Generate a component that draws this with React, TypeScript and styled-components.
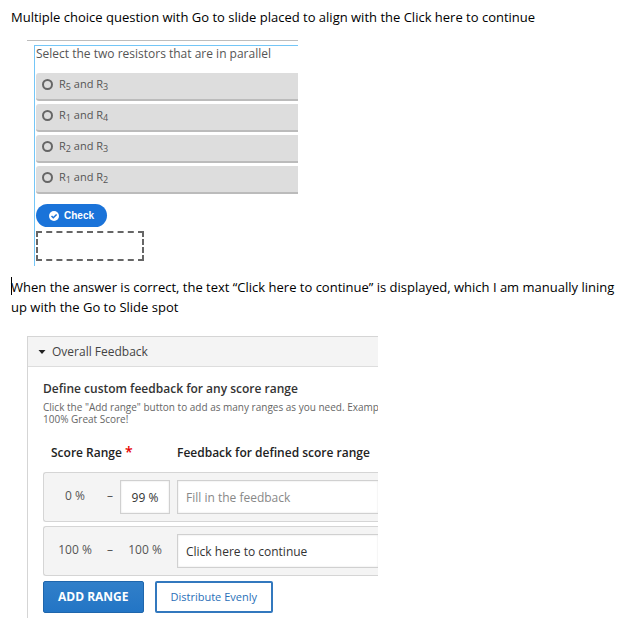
import React from "react";
import styled, { createGlobalStyle } from "styled-components";

const GlobalStyle = createGlobalStyle`
  *, *::before, *::after { box-sizing: border-box; }
  body {
    margin: 0;
    background: #fff;
    color: #000;
    font-family: "Open Sans", "Noto Sans", sans-serif;
  }
`;

const Document = styled.main`
  padding: 7px 0 6px 11px;
`;

const Paragraph = styled.p`
  margin: 0;
  font: 13px/20px "Open Sans", "Noto Sans", sans-serif;
`;

const Caret = styled.span`
  position: absolute;
  width: 1px;
  height: 18px;
  background: #000;
`;

const QuizFigure = styled.section`
  max-width: 271px;
  margin: 13px 0 11px 16px;
  padding: 4px 0 0 7px;
  border-top: 1px solid #bdbdbd;
`;

const QuizSlide = styled.form`
  padding: 0 0 5px 1px;
  border: solid #74c6f7;
  border-width: 1px 0 0 1px;
`;

const Question = styled.h2`
  margin: 0 0 11px;
  color: #555;
  font-size: 12px;
  font-weight: 400;
  line-height: 16px;
  white-space: nowrap;
`;

const Answers = styled.div`
  display: grid;
  gap: 3px;
  color: #555;
`;

const Answer = styled.label`
  display: flex;
  align-items: center;
  gap: 6px;
  height: 28px;
  padding: 0 6px 4px;
  background: #ddd;
  border-bottom: 2px solid #bbb;
  border-radius: 3px 0 0 3px;
  font-size: 11px;
  line-height: 20px;
`;

const Radio = styled.input`
  appearance: none;
  width: 11px;
  height: 11px;
  margin: 0;
  border: 2px solid #666;
  border-radius: 50%;

  &:checked { background: #1a73d9; }
`;

const Sub = styled.sub`
  font-size: 9px;
  line-height: 0;
  vertical-align: -2px;
`;

const CheckButton = styled.button`
  display: flex;
  align-items: center;
  gap: 5px;
  height: 23px;
  margin-top: 10px;
  padding: 0 13px;
  border: 0;
  border-radius: 12px;
  background: #1a73d9;
  color: #fff;
  font: 700 10px/16px "Liberation Sans", Arial, sans-serif;
`;

const HotSpot = styled.button`
  display: block;
  width: 108px;
  height: 30px;
  margin-top: 4px;
  border: 2px dashed #666;
  background: transparent;
`;

const FeedbackPanel = styled.section`
  max-width: 351px;
  margin: 19px 0 0 16px;
  overflow: hidden;
  border: solid #d5d5d5;
  border-width: 1px 0 0 1px;
`;

const PanelToggle = styled.button`
  display: flex;
  align-items: center;
  gap: 6px;
  width: 100%;
  height: 30px;
  padding: 0 10px;
  border: 0;
  border-bottom: 1px solid #ddd;
  background: #f4f4f4;
  color: #444;
  font: 12px/20px "Open Sans", sans-serif;
`;

const PanelBody = styled.form`
  padding: 12px 0 5px 15px;
`;

const PanelTitle = styled.h3`
  margin: 0;
  color: #333;
  font-size: 12px;
  font-weight: 600;
  line-height: 20px;
`;

const Hint = styled.p`
  margin: 2px 0 0;
  color: #666;
  font-size: 10px;
  line-height: 12px;
  white-space: nowrap;
`;

const ColumnHeads = styled.div`
  display: grid;
  grid-template-columns: 126px minmax(0, 1fr);
  gap: 0 8px;
  margin: 18px 0 9px;
  color: #222;
  font-size: 12px;
  font-weight: 600;
  line-height: 20px;
  white-space: nowrap;
`;

const ScoreHead = styled.span`
  padding-left: 8px;
`;

const Required = styled.span`
  margin-left: 3px;
  color: #e60000;
  font-size: 14px;
  line-height: 0;
`;

const Ranges = styled.div`
  display: grid;
  gap: 4px;
`;

const RangeRow = styled.div`
  display: grid;
  grid-template-columns: 62px 14px 50px minmax(0, 1fr);
  align-items: center;
  height: 50px;
  border: 1px solid #d5d5d5;
  border-right: 0;
  border-radius: 3px 0 0 3px;
  background: #f4f4f4;
  color: #555;
  font-size: 12px;
`;

const Score = styled.span`
  padding-bottom: 4px;
  text-align: center;
`;

const Dash = styled.span`
  padding: 0 0 4px 1px;
`;

const Field = styled.input`
  width: 100%;
  height: 34px;
  padding: 0;
  border: 1px solid #d0d0d0;
  background: #fff;
  box-shadow: inset 0 0 2px #ddd;
  color: #333;
  font: 12px/20px "Open Sans", sans-serif;

  &::placeholder { color: #888; opacity: 1; }
`;

const ScoreField = styled(Field)`
  text-align: center;
`;

const FeedbackField = styled(Field)`
  width: auto;
  margin-left: 7px;
  padding-left: 8px;
  border-right: 0;
`;

const Actions = styled.div`
  display: flex;
  gap: 11px;
  margin-top: 5px;
`;

const ActionButton = styled.button<{ $primary?: boolean }>`
  height: 32px;
  padding: 0 14px;
  border: ${(p) => (p.$primary ? "1px solid #1f66ac" : "2px solid #3278be")};
  border-radius: 2px;
  background: ${(p) => (p.$primary ? "linear-gradient(#317fc9, #2375c5)" : "#fff")};
  color: ${(p) => (p.$primary ? "#fff" : "#2a6fb8")};
  font: ${(p) => (p.$primary ? "700 12px" : "500 11px")}/20px "Open Sans", sans-serif;
  white-space: nowrap;
`;

const answers = [
  [5, 3],
  [1, 4],
  [2, 3],
  [1, 2],
];

export default function App() {
  return (
    <>
      <GlobalStyle />
      <Document>
        <Paragraph>
          Multiple choice question with Go to slide placed to align with the Click here to continue
        </Paragraph>

        <QuizFigure>
          <QuizSlide>
            <Question id="question">Select the two resistors that are in parallel</Question>
            <Answers role="radiogroup" aria-labelledby="question">
              {answers.map(([a, b]) => (
                <Answer key={`${a}-${b}`}>
                  <Radio type="radio" name="answer" value={`${a}-${b}`} />
                  <span>
                    R<Sub>{a}</Sub> and R<Sub>{b}</Sub>
                  </span>
                </Answer>
              ))}
            </Answers>
            <CheckButton type="button">
              <svg width="10" height="10" viewBox="0 0 10 10" aria-hidden="true">
                <circle cx="5" cy="5" r="5" fill="#fff" />
                <path d="M2.5 5 4.3 6.8 7.6 3.5" fill="none" stroke="#1a73d9" strokeWidth="1.5" />
              </svg>
              Check
            </CheckButton>
            <HotSpot type="button" aria-label="Go to slide" />
          </QuizSlide>
        </QuizFigure>

        <Paragraph>
          <Caret />
          When the answer is correct, the text “Click here to continue” is displayed, which I am
          manually lining
          <br />
          up with the Go to Slide spot
        </Paragraph>

        <FeedbackPanel>
          <PanelToggle type="button" aria-expanded="true">
            <svg width="8" height="4" viewBox="0 0 8 4" aria-hidden="true">
              <path d="M0.5 0h7L4 4z" fill="#222" />
            </svg>
            Overall Feedback
          </PanelToggle>
          <PanelBody>
            <PanelTitle>Define custom feedback for any score range</PanelTitle>
            <Hint>
              Click the "Add range" button to add as many ranges as you need. Examp
              <br />
              100% Great Score!
            </Hint>
            <ColumnHeads>
              <ScoreHead>
                Score Range<Required>*</Required>
              </ScoreHead>
              <span>Feedback for defined score range</span>
            </ColumnHeads>
            <Ranges>
              <RangeRow>
                <Score>0 %</Score>
                <Dash>–</Dash>
                <ScoreField aria-label="Score range end" defaultValue="99 %" />
                <FeedbackField aria-label="Feedback for 0 to 99 %" placeholder="Fill in the feedback" />
              </RangeRow>
              <RangeRow>
                <Score>100 %</Score>
                <Dash>–</Dash>
                <Score>100 %</Score>
                <FeedbackField aria-label="Feedback for 100 %" defaultValue="Click here to continue" />
              </RangeRow>
            </Ranges>
            <Actions>
              <ActionButton type="button" $primary>
                ADD RANGE
              </ActionButton>
              <ActionButton type="button">Distribute Evenly</ActionButton>
            </Actions>
          </PanelBody>
        </FeedbackPanel>
      </Document>
    </>
  );
}
